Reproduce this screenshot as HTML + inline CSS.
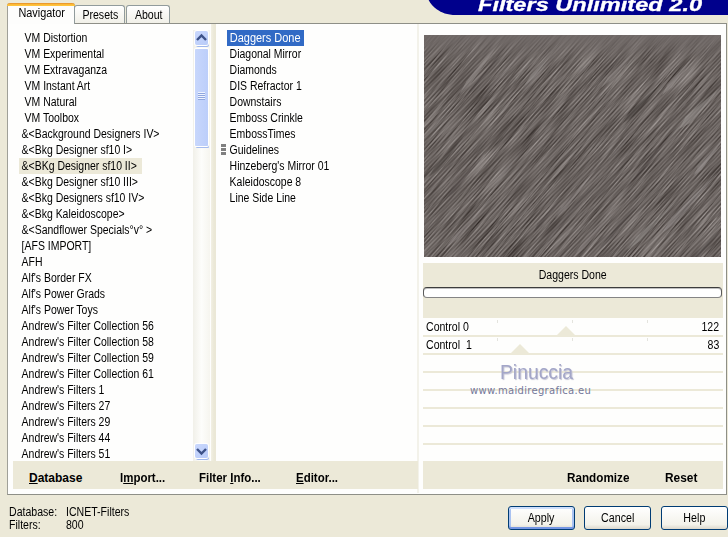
<!DOCTYPE html>
<html><head><meta charset="utf-8">
<style>
html,body{margin:0;padding:0;}
body{width:728px;height:537px;position:relative;overflow:hidden;background:#ECE9D8;font-family:"Liberation Sans",sans-serif;font-size:12px;color:#000;}
.abs{position:absolute;}
#pane{left:7px;top:23px;width:720px;height:472px;background:#fefefd;border:1px solid #8e8f87;border-left-color:#a0a098;box-sizing:border-box;}
.tab{position:absolute;box-sizing:border-box;border:1px solid #919b9c;border-bottom:none;border-radius:3px 3px 0 0;background:linear-gradient(#ffffff,#f1f0e8);text-align:center;font-size:12px;}
.tab span{display:inline-block;transform:scaleX(.88);position:relative;left:.5px;}
#tab1{left:7px;top:3px;width:68px;height:21px;background:#fdfdfc;border-top:none;border-left-color:#a0a098;padding-top:3px;line-height:15px;}
#tab1:before{content:'';position:absolute;left:-1px;right:-1px;top:0;height:3px;border-radius:3px 3px 0 0;background:linear-gradient(#e28a2a,#fbb935 50%,#ffc840);}
#tab1 span{transform:scaleX(.905);}
#tab2{left:74px;top:5px;width:51px;height:18px;line-height:18px;}
#tab3{left:126px;top:5px;width:44px;height:18px;line-height:18px;}
#banner{left:428px;top:0;width:300px;height:15px;background:#00008c;border-bottom-left-radius:26px 15px;}
#title{left:478px;top:-5px;-webkit-text-stroke:.3px #fff;font:italic bold 18px "Liberation Sans",sans-serif;color:#fff;white-space:nowrap;transform:scaleX(1.31);transform-origin:0 0;}
.list{position:absolute;top:30px;}
.list div{height:16px;line-height:16px;white-space:nowrap;padding:0 3px;transform:scaleX(.88);transform-origin:0 0;}
#l1{left:18.5px;}
#l1 div{transform:scaleX(.872);}
#l2{left:226.5px;}
#l2 div{transform:scaleX(.872);}
#sel{left:227px;top:30px;width:77px;height:16px;background:#316ac5;}
#cur{left:19px;top:158px;width:123px;height:16px;background:#ece9d8;}
#gap{left:211px;top:24px;width:5px;height:437px;background:linear-gradient(90deg,#f2f0e4,#ebe8d7 60%);}
#vline{left:417px;top:24px;width:2px;height:469px;background:#f3f2ea;}
#sb{left:193px;top:30px;width:17px;height:431px;background:linear-gradient(90deg,#f1f0e9,#fdfdfb 50%,#f6f5ef);}
#sbthumb{left:195px;top:49px;width:13px;height:97px;background:linear-gradient(90deg,#c8d7fc,#bccefa);box-shadow:0 0 0 1px #fff,1px 2px 0 0 #a6bcee;border-radius:1px;}
.grip{position:absolute;left:198px;width:7px;height:1px;background:#eef3fe;box-shadow:0 1px 0 #8fa6de;}
.sbbtn{position:absolute;left:195px;width:13px;height:14px;background:linear-gradient(135deg,#cad8fd,#b8cbf8);box-shadow:0 0 0 1px #fff,1px 2px 0 0 #9fb7ec;border-radius:2px;}
#botl{left:13px;top:461px;width:405px;height:28px;background:#ece9d8;}
#botr{left:423px;top:461px;width:300px;height:28px;background:#ece9d8;}
.bl{position:absolute;font-weight:bold;font-size:12px;top:471px;white-space:nowrap;transform:scaleX(.955);transform-origin:0 0;}
#preview{left:424px;top:35px;}
#beige1{left:423px;top:263px;width:300px;height:55px;background:#ece9d8;}
#pname{left:423px;top:268px;width:300px;text-align:center;}
#pname span{display:inline-block;transform:scaleX(.88);}
#prog{left:423px;top:287px;width:299px;height:11px;box-sizing:border-box;border:1px solid;border-color:#3c3c3c #5a5a5a #858585 #5a5a5a;box-shadow:inset 0 1px 0 #c0c0c0;border-radius:4px;background:#fff;}
.sep{position:absolute;left:423px;width:300px;height:2px;background:#ece9d8;}
.ctl{position:absolute;left:425.8px;transform:scaleX(.88);transform-origin:0 0;white-space:nowrap;}
.val{position:absolute;right:9px;text-align:right;transform:scaleX(.88);transform-origin:100% 0;}
.tri{position:absolute;width:0;height:0;border-left:9px solid transparent;border-right:9px solid transparent;border-bottom:9px solid #ece9d8;}
.tk{position:absolute;width:1px;height:3px;background:#e4e4de;}
.nx{transform:scaleX(.88);transform-origin:0 0;white-space:nowrap;}
.btn{position:absolute;top:506px;width:67px;height:24px;box-sizing:border-box;border:1px solid #003c74;border-radius:3px;background:linear-gradient(#ffffff,#f3f2ea 80%,#dcd8cc);text-align:center;line-height:22px;font-size:12px;}
.btn span{display:inline-block;transform:scaleX(.89);}
#apply{box-shadow:inset 0 2px 0 #cfdffc,inset 0 -2px 0 #7596e3,inset 2px 0 0 #a9c2f1,inset -2px 0 0 #a9c2f1;}
.wm1{left:500px;top:361px;font:20px "Liberation Sans",sans-serif;color:#a3a6c8;letter-spacing:0px;transform:scaleX(.965);transform-origin:0 0;text-shadow:1px 1px 1px #c4c4d4;}
.wm2{left:470px;top:385px;font:10px "DejaVu Sans",sans-serif;color:#74789a;letter-spacing:.3px;}
</style></head><body>
<div id="pane" class="abs"></div>
<div id="tab2" class="tab"><span>Presets</span></div>
<div id="tab3" class="tab"><span>About</span></div>
<div id="tab1" class="tab"><span>Navigator</span></div>
<svg class="abs" style="left:420px;top:0" width="308" height="16" viewBox="420 0 308 16"><path d="M428.6,0 C430.5,3.5 433.5,7.2 437,9.4 C441.5,12.4 447,14.9 456,15 L728,15 L728,0 Z" fill="#00008c"/></svg>
<div id="title" class="abs">Filters Unlimited 2.0</div>

<div id="cur" class="abs"></div>
<div id="sel" class="abs"></div>
<div id="l1" class="list"><div> VM Distortion</div><div> VM Experimental</div><div> VM Extravaganza</div><div> VM Instant Art</div><div> VM Natural</div><div> VM Toolbox</div><div>&amp;&lt;Background Designers IV&gt;</div><div>&amp;&lt;Bkg Designer sf10 I&gt;</div><div>&amp;&lt;BKg Designer sf10 II&gt;</div><div>&amp;&lt;Bkg Designer sf10 III&gt;</div><div>&amp;&lt;Bkg Designers sf10 IV&gt;</div><div>&amp;&lt;Bkg Kaleidoscope&gt;</div><div>&amp;&lt;Sandflower Specials°v° &gt;</div><div>[AFS IMPORT]</div><div>AFH</div><div>Alf's Border FX</div><div>Alf's Power Grads</div><div>Alf's Power Toys</div><div>Andrew's Filter Collection 56</div><div>Andrew's Filter Collection 58</div><div>Andrew's Filter Collection 59</div><div>Andrew's Filter Collection 61</div><div>Andrew's Filters 1</div><div>Andrew's Filters 27</div><div>Andrew's Filters 29</div><div>Andrew's Filters 44</div><div>Andrew's Filters 51</div></div>

<div id="sb" class="abs"></div>
<div class="sbbtn" style="top:31px"><svg width="13" height="14" style="display:block"><path d="M2 9 L6.5 4.5 L11 9" fill="none" stroke="#3d5288" stroke-width="2.4"/></svg></div>
<div id="sbthumb" class="abs"></div>
<div class="grip" style="top:92px"></div><div class="grip" style="top:94px"></div><div class="grip" style="top:96px"></div><div class="grip" style="top:98px"></div>
<div class="sbbtn" style="top:444px"><svg width="13" height="14" style="display:block"><path d="M2 5 L6.5 9.5 L11 5" fill="none" stroke="#3d5288" stroke-width="2.4"/></svg></div>
<div id="gap" class="abs"></div>
<div id="vline" class="abs"></div>

<div id="l2" class="list"><div style="color:#fff;transform:scaleX(.915)">Daggers Done</div><div>Diagonal Mirror</div><div>Diamonds</div><div>DIS Refractor 1</div><div>Downstairs</div><div>Emboss Crinkle</div><div>EmbossTimes</div><div>Guidelines</div><div>Hinzeberg's Mirror 01</div><div>Kaleidoscope 8</div><div>Line Side Line</div></div>
<div class="abs" style="left:221px;top:144px;width:5px;height:3px;background:#808080;box-shadow:0 4px 0 #808080,0 8px 0 #808080;"></div>

<div id="botl" class="abs"></div>
<div id="botr" class="abs"></div>
<div class="bl" style="left:29px;transform:none"><u>D</u>atabase</div>
<div class="bl" style="left:119.8px">I<u>m</u>port...</div>
<div class="bl" style="left:198.8px">Filter <u>I</u>nfo...</div>
<div class="bl" style="left:295.8px"><u>E</u>ditor...</div>
<div class="bl" style="left:566.6px;transform:scaleX(.975)">Randomize</div>
<div class="bl" style="left:665.4px;transform:scaleX(.99)">Reset</div>

<svg id="preview" class="abs" width="297" height="222" viewBox="0 0 297 222">
<defs>
<pattern id="hat" width="4" height="4" patternUnits="userSpaceOnUse"><rect width="4" height="4" fill="#6a6361"/><path d="M-1 1 L1 -1 M-1 5 L5 -1 M3 5 L5 3" stroke="#8c8684" stroke-width="1" opacity=".7"/><path d="M-1 3 L3 -1 M1 5 L5 1" stroke="#4a4442" stroke-width="1" opacity=".7"/></pattern>
<filter id="nf" x="0" y="0" width="100%" height="100%" color-interpolation-filters="sRGB">
<feTurbulence type="fractalNoise" baseFrequency="0.02 0.6" numOctaves="2" seed="11"/>
<feColorMatrix type="matrix" values="1.0 0 0 0 -0.08  1.0 0 0 0 -0.11  1.0 0 0 0 -0.125  0 0 0 0 1"/>
</filter>
<linearGradient id="tg" x1="0" y1="0" x2="0" y2="1"><stop offset="0" stop-color="#716a68" stop-opacity=".9"/><stop offset=".12" stop-color="#716a68" stop-opacity="0"/></linearGradient>
<clipPath id="pc"><rect width="297" height="222"/></clipPath>
</defs>
<rect width="297" height="222" fill="url(#hat)"/>
<g clip-path="url(#pc)"><rect transform="rotate(-50 148 111)" x="-60" y="-110" width="420" height="440" filter="url(#nf)" opacity=".5"/></g>
<polygon points="35.0,60.0 46.4,49.2 78.0,4.0 42.5,46.2" fill="#aaa4a2" opacity="0.45"/><polygon points="100.0,51.0 109.9,42.4 138.0,6.0 106.8,39.8" fill="#aaa4a2" opacity="0.40"/><polygon points="177.0,53.0 186.6,45.3 214.0,12.0 183.7,42.6" fill="#aaa4a2" opacity="0.45"/><polygon points="238.0,60.0 247.4,52.6 272.0,19.0 243.6,49.4" fill="#aaa4a2" opacity="0.45"/><polygon points="199.0,88.0 209.8,81.0 238.0,47.0 205.4,76.9" fill="#3a3432" opacity="0.40"/><polygon points="255.0,94.0 267.3,87.4 298.0,51.0 261.6,81.7" fill="#aaa4a2" opacity="0.40"/><polygon points="238.0,198.0 252.9,186.9 294.0,137.0 247.7,182.2" fill="#aaa4a2" opacity="0.35"/><polygon points="203.0,215.0 216.6,205.7 255.0,163.0 212.3,201.4" fill="#aaa4a2" opacity="0.30"/><polygon points="5.0,142.0 14.4,135.1 39.0,103.0 10.6,131.8" fill="#3a3432" opacity="0.35"/><polygon points="60.0,120.0 72.9,108.9 110.0,62.0 69.1,105.6" fill="#3a3432" opacity="0.30"/><polygon points="130.0,150.0 141.4,139.9 175.0,98.0 138.4,137.3" fill="#3a3432" opacity="0.30"/><polygon points="20.0,215.0 32.8,204.6 70.0,160.0 29.2,201.2" fill="#aaa4a2" opacity="0.25"/><polygon points="270.0,140.0 277.9,134.6 297.0,108.0 274.0,131.3" fill="#aaa4a2" opacity="0.35"/><polygon points="150.0,222.0 160.7,213.5 190.0,176.0 156.9,210.2" fill="#aaa4a2" opacity="0.25"/><polygon points="55.6,68.0 69.6,55.2 110.6,2.5 65.8,52.0" fill="#aaa4a2" opacity="0.14"/><polygon points="148.1,259.2 157.4,251.3 183.4,217.1 154.3,248.7" fill="#aaa4a2" opacity="0.13"/><polygon points="-27.6,137.0 -12.6,121.4 35.3,62.0 -14.9,119.5" fill="#aaa4a2" opacity="0.22"/><polygon points="148.1,45.6 160.7,32.9 200.2,-16.5 158.4,31.0" fill="#aaa4a2" opacity="0.13"/><polygon points="246.5,103.0 254.7,95.5 278.7,64.6 252.4,93.6" fill="#aaa4a2" opacity="0.21"/><polygon points="183.5,56.0 195.6,43.1 234.9,-5.3 194.0,41.8" fill="#aaa4a2" opacity="0.21"/><polygon points="-37.6,45.0 -28.4,37.1 -2.6,3.3 -31.4,34.6" fill="#3a3432" opacity="0.24"/><polygon points="106.2,262.7 116.6,252.7 148.2,212.7 114.3,250.7" fill="#aaa4a2" opacity="0.23"/><polygon points="27.1,174.8 39.5,163.1 76.5,116.0 36.5,160.5" fill="#3a3432" opacity="0.17"/><polygon points="289.9,59.8 300.9,49.0 334.4,6.7 298.6,47.1" fill="#3a3432" opacity="0.27"/><polygon points="90.5,272.4 98.1,265.7 119.8,237.6 95.8,263.8" fill="#3a3432" opacity="0.17"/><polygon points="65.0,155.2 79.3,139.7 126.6,81.8 77.8,138.4" fill="#aaa4a2" opacity="0.27"/><polygon points="109.3,197.4 117.4,191.5 137.7,163.5 113.6,188.3" fill="#3a3432" opacity="0.28"/><polygon points="233.4,101.7 243.7,91.1 276.5,50.4 242.1,89.8" fill="#3a3432" opacity="0.27"/><polygon points="66.9,184.0 78.6,172.4 114.8,126.8 76.3,170.4" fill="#aaa4a2" opacity="0.14"/><polygon points="28.4,128.5 44.2,112.8 93.3,51.1 41.1,110.2" fill="#aaa4a2" opacity="0.18"/><polygon points="39.2,64.5 50.6,54.0 84.3,10.8 47.6,51.4" fill="#3a3432" opacity="0.28"/><polygon points="183.7,125.9 192.8,117.4 219.8,82.9 190.5,115.4" fill="#aaa4a2" opacity="0.16"/><polygon points="23.3,152.2 35.6,139.2 75.5,90.0 34.0,137.9" fill="#aaa4a2" opacity="0.14"/><polygon points="130.8,183.7 141.6,174.8 170.9,135.9 137.7,171.6" fill="#aaa4a2" opacity="0.27"/><polygon points="173.8,216.4 185.9,205.9 220.1,161.3 182.1,202.7" fill="#3a3432" opacity="0.18"/><polygon points="82.4,56.1 95.1,42.5 136.7,-8.6 93.6,41.2" fill="#aaa4a2" opacity="0.28"/><polygon points="97.3,57.7 110.8,45.5 150.0,-5.2 107.0,42.3" fill="#aaa4a2" opacity="0.14"/><polygon points="-23.8,121.6 -16.0,116.2 3.1,89.6 -19.8,113.0" fill="#3a3432" opacity="0.18"/><polygon points="166.5,270.8 178.9,257.6 219.3,207.8 177.3,256.3" fill="#aaa4a2" opacity="0.26"/><polygon points="294.5,147.4 305.7,135.6 342.0,90.8 304.2,134.3" fill="#aaa4a2" opacity="0.24"/><polygon points="204.3,150.6 218.0,136.7 261.2,82.9 215.7,134.7" fill="#3a3432" opacity="0.27"/><polygon points="128.6,66.9 141.5,55.4 178.7,7.2 137.7,52.2" fill="#aaa4a2" opacity="0.17"/><polygon points="169.5,52.9 184.7,37.2 233.3,-23.0 182.4,35.3" fill="#3a3432" opacity="0.18"/><polygon points="19.5,166.5 32.1,155.4 67.9,108.9 28.3,152.2" fill="#3a3432" opacity="0.25"/><polygon points="291.6,244.9 306.4,229.6 353.6,171.0 304.1,227.6" fill="#3a3432" opacity="0.15"/><polygon points="115.9,214.2 132.9,197.1 186.2,130.5 129.8,194.5" fill="#3a3432" opacity="0.16"/><polygon points="187.2,271.0 198.5,260.0 233.1,216.4 196.2,258.1" fill="#3a3432" opacity="0.27"/><polygon points="70.2,85.6 79.2,77.1 106.1,42.8 76.9,75.2" fill="#aaa4a2" opacity="0.20"/><polygon points="291.7,183.8 298.6,178.0 317.5,153.0 296.3,176.1" fill="#3a3432" opacity="0.25"/><polygon points="-29.7,196.5 -13.9,180.0 36.9,117.0 -16.2,178.0" fill="#3a3432" opacity="0.20"/><polygon points="3.7,228.9 14.2,219.5 44.4,180.4 11.1,216.9" fill="#3a3432" opacity="0.19"/><polygon points="205.4,51.4 213.4,43.4 238.2,12.2 211.8,42.1" fill="#3a3432" opacity="0.14"/><polygon points="263.0,233.2 271.7,226.1 295.3,194.8 268.6,223.5" fill="#3a3432" opacity="0.23"/><polygon points="65.1,168.3 72.8,160.6 96.7,130.6 71.3,159.3" fill="#aaa4a2" opacity="0.20"/>
<rect width="297" height="222" fill="url(#tg)"/>
</svg>
<div id="beige1" class="abs"></div>
<div id="pname" class="abs"><span>Daggers Done</span></div>
<div id="prog" class="abs"></div>

<div class="sep" style="top:335px"></div>
<div class="sep" style="top:353px"></div>
<div class="sep" style="top:371px"></div>
<div class="sep" style="top:389px"></div>
<div class="sep" style="top:407px"></div>
<div class="sep" style="top:425px"></div>
<div class="sep" style="top:443px"></div>
<div class="ctl" style="top:320px">Control 0</div>
<div class="ctl" style="top:338px">Control&nbsp; 1</div>
<div class="val" style="top:320px">122</div>
<div class="val" style="top:338px">83</div>
<div class="tri" style="left:557px;top:326px"></div>
<div class="tri" style="left:511px;top:344px"></div>
<div class="tk" style="left:497px;top:320px"></div><div class="tk" style="left:572px;top:320px"></div><div class="tk" style="left:647px;top:320px"></div><div class="tk" style="left:497px;top:338px"></div><div class="tk" style="left:572px;top:338px"></div><div class="tk" style="left:647px;top:338px"></div>
<div class="abs wm1">Pinuccia</div>
<div class="abs wm2">www.maidiregrafica.eu</div>

<div class="abs nx" style="left:9px;top:505px;">Database:</div>
<div class="abs nx" style="left:66px;top:505px;">ICNET-Filters</div>
<div class="abs nx" style="left:9px;top:518px;">Filters:</div>
<div class="abs nx" style="left:66px;top:518px;">800</div>

<div class="btn" id="apply" style="left:508px;"><span>Apply</span></div>
<div class="btn" style="left:584px;"><span>Cancel</span></div>
<div class="btn" style="left:661px;"><span>Help</span></div>
</body></html>
